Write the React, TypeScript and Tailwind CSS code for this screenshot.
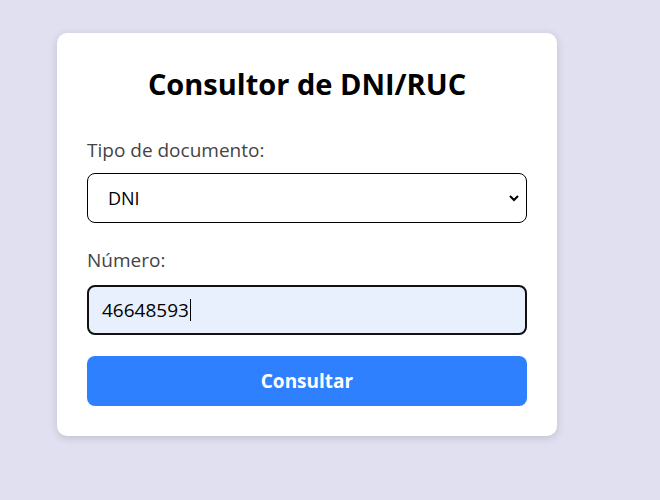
export default function App() {
  return (
    <main className="min-h-[500px] w-full bg-[#e1e0f0] pt-[33px] pl-[57px] font-['Open_Sans',sans-serif]">
      {/* Card */}
      <div className="w-[500px] rounded-[10px] bg-white p-[30px] shadow-[0_2px_8px_rgba(0,0,0,0.15)]">
        <h1 className="mt-[4px] text-center text-[29px] leading-[34px] font-bold text-black">
          Consultor de DNI/RUC
        </h1>

        <div className="mt-[37px] flex flex-col">
          <label className="text-[19px] leading-[24px] text-[#444]">Tipo de documento:</label>
          <div className="mt-[11px] flex h-[50px] items-center justify-between rounded-[8px] border border-black pl-[20px] pr-[6px]">
            <span className="text-[18px] text-black">DNI</span>
            <svg width="12" height="12" viewBox="0 0 12 12" className="text-black">
              <path d="M2 4 L6 8 L10 4" fill="none" stroke="currentColor" strokeWidth="2" />
            </svg>
          </div>

          <label className="mt-[25px] text-[19px] leading-[24px] text-[#444]">Número:</label>
          <div className="mt-[13px] flex h-[50px] items-center rounded-[8px] border-2 border-[#111] bg-[#e8f0fe] pl-[13px]">
            <span className="text-[19px] text-black">46648593</span>
            <span className="ml-[1px] h-[22px] w-px bg-black" />
          </div>

          <button className="mt-[21px] h-[50px] rounded-[8px] bg-[#2f80ff] text-[19px] font-bold text-white">
            Consultar
          </button>
        </div>
      </div>
    </main>
  );
}
